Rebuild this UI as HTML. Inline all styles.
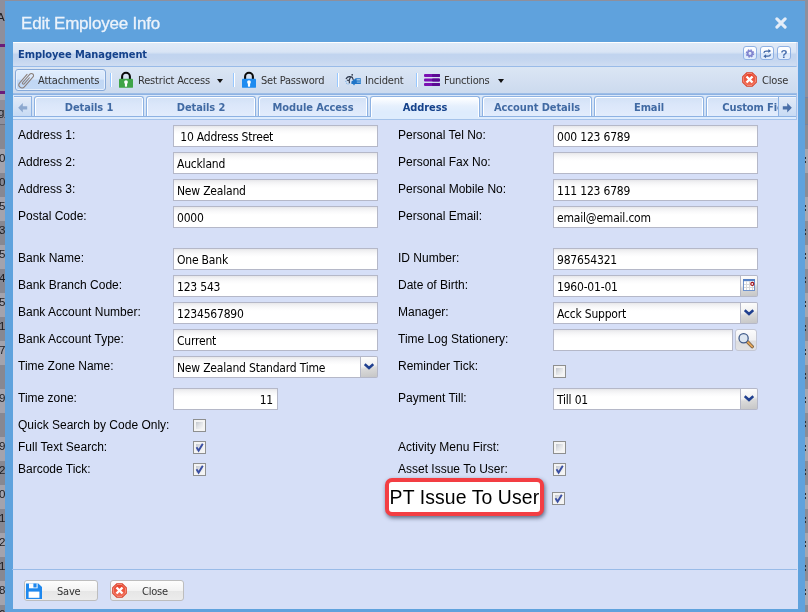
<!DOCTYPE html>
<html>
<head>
<meta charset="utf-8">
<title>Edit Employee Info</title>
<style>
html,body{margin:0;padding:0;}
body{width:808px;height:612px;overflow:hidden;background:#8e8f9c;position:relative;font-family:"Liberation Sans",sans-serif;}
*{box-sizing:border-box;}
.abs{position:absolute;}
#modal{position:absolute;left:5px;top:1px;width:800px;height:620px;background:#5fa2dd;}
#title{position:absolute;left:21px;top:14px;font:17px "Liberation Sans",sans-serif;color:#ecf3fb;-webkit-text-stroke:0.3px #ecf3fb;letter-spacing:-0.2px;white-space:nowrap;line-height:20px;}
#xclose{position:absolute;left:775px;top:17px;width:12px;height:12px;}
#panel{position:absolute;left:12px;top:42px;width:785.5px;height:566.5px;background:#d6dff7;overflow:hidden;}
#phead{position:absolute;left:0;top:0;width:785px;height:25px;border:1px solid #99bbe8;border-top-color:#fff;border-left-color:#c5d7f0;border-right-color:#c5d7f0;
 background:linear-gradient(#e0eaf7 0,#d9e5f5 9px,#c1d4ef 11.5px,#c3d5ef 16px,#cfddf2 23px);}
#phead .t{position:absolute;left:5px;top:4px;font:bold 11px "DejaVu Sans Condensed","DejaVu Sans",sans-serif;font-stretch:condensed;color:#15428b;letter-spacing:-0.08px;white-space:nowrap;line-height:15px;}
.tool{position:absolute;top:3px;width:14px;height:14px;border:1px solid #8fb1e4;border-radius:3px;background:linear-gradient(#fff 0,#f6faff 48%,#d9e7fa 52%,#e3eefc 100%);}
.tool svg{position:absolute;left:0;top:0}
#tbar{position:absolute;left:0;top:25px;width:785px;height:27px;border-bottom:1px solid #9dbde6;background:linear-gradient(#dbe6f4 0,#d5e1f2 40%,#ccdaee 100%);}
.tbtxt{position:absolute;font:11px "DejaVu Sans Condensed","DejaVu Sans",sans-serif;font-stretch:condensed;color:#333;white-space:nowrap;line-height:14px;letter-spacing:-0.18px;}
.sep{position:absolute;top:28px;width:2px;height:14px;border-left:1px solid #98c8ff;border-right:1px solid #fff;top:6px}
#tabhead{position:absolute;left:0;top:52px;width:785px;height:26px;background:#deecfd;border:1px solid #8db2e3;border-bottom:none;border-left-color:#93b6e6;border-right-color:#a8c5ec;}
#tabstrip{position:absolute;left:0;top:0;width:783px;height:22px;border-bottom:1px solid #8db2e3;background:linear-gradient(#dbe8f9,#cedff5);}
#tabspacer{position:absolute;left:0px;top:75px;width:785px;height:3px;background:#deecfd;border:1px solid #a8c5ec;border-top:none;border-bottom-color:#a5c3ea;}
.tab{position:absolute;top:1px;width:110px;height:20px;border:1px solid #8db2e3;border-bottom:none;border-radius:3px 3px 0 0;background:linear-gradient(#d2e1f6 0,#dbe7fa 40%,#e2ecfc 100%);box-shadow:inset 1px 1px 0 #fff,inset -1px 0 0 #fff;text-align:center;font:bold 11px "DejaVu Sans Condensed","DejaVu Sans",sans-serif;font-stretch:condensed;color:#416aa3;line-height:18px;padding-top:2px;letter-spacing:-0.1px;white-space:nowrap;overflow:hidden;}
.tab.act{height:21px;background:linear-gradient(#fff 0,#f6faff 18%,#e6f0fd 45%,#deecfd 75%);color:#15428b;}
.scr{position:absolute;top:1px;width:18px;height:20px;background:linear-gradient(#e2eaf7,#c8dbf4);border-top:1px solid #8db2e3;box-shadow:inset 0 1px 0 #eef3fb;}
#body{position:absolute;left:-12px;top:-42px;width:808px;height:612px;}
.lbl{position:absolute;font:12px "Liberation Sans",sans-serif;color:#000;white-space:nowrap;line-height:14px;}
.inp{position:absolute;height:22px;border:1px solid #b5b8c8;background:#fff linear-gradient(#e6e6e9 0,#f1f1f3 2px,#fafafb 5px,#fff 8px);font:12px "DejaVu Sans Condensed","DejaVu Sans",sans-serif;font-stretch:condensed;color:#000;line-height:20px;padding:1px 0 0 3px;white-space:pre;letter-spacing:-0.2px;overflow:hidden;}
.trig{position:absolute;width:17px;height:22px;border:1px solid #b5b8c8;border-left:none;border-radius:0 2px 2px 0;background:linear-gradient(172deg,#fdfdfd 0,#f1f1f1 44%,#dadada 56%,#c6c6c6 100%);}
.cb{position:absolute;width:13px;height:13px;border:1px solid #8e8f8f;padding:2px;background:linear-gradient(135deg,#c3c7ce 0%,#e2e4e7 50%,#f7f7f7 100%) content-box,#f4f4f4;}
#foot{position:absolute;left:0;top:527px;width:785px;height:39px;border-top:1px solid #99bbe8;}
.btn{position:absolute;top:10px;width:74px;height:21px;border:1px solid #bdbdbd;border-radius:3px;background:linear-gradient(#fdfdfd,#f3f3f3 50%,#e6e6e6 52%,#ececec);}
.btn span{position:absolute;top:4px;font:11px "DejaVu Sans Condensed","DejaVu Sans",sans-serif;font-stretch:condensed;color:#333;line-height:14px;letter-spacing:-0.2px;}
#hl{position:absolute;left:384.6px;top:478px;width:159px;height:38px;border:4px solid #f33e43;border-radius:7px;background:#fff;box-shadow:1px 2px 4px rgba(20,30,60,.62);}
#hl span{position:absolute;left:1px;top:4px;font:19.4px "Liberation Sans",sans-serif;color:#000;white-space:nowrap;line-height:22px;letter-spacing:0.1px;}

.abtn{position:absolute;left:3px;top:2px;width:91px;height:22px;border:1px solid #86a9d9;border-radius:3px;background:linear-gradient(#e0edfd,#d8e7fb 46%,#c1d7f4 50%,#c3d9f5);box-shadow:inset 0 0 0 1px #e6f0fd;}
.arr{position:absolute;width:0;height:0;border-left:3.5px solid transparent;border-right:3.5px solid transparent;border-top:4px solid #111;}
.sbtn{position:absolute;width:22px;height:22px;border:1px solid #c4c7d4;border-radius:3px;background:linear-gradient(#fbfbfc,#f0f0f2 50%,#dededf 55%,#e2e2e4);}

#lstrip{position:absolute;left:0;top:0;width:5px;height:612px;overflow:hidden;background:#8e8f9c;}
#rstrip{position:absolute;left:805px;top:0;width:3px;height:612px;overflow:hidden;background:#8e8f9c;}
.bands{position:absolute;left:0;top:125px;width:5px;height:490px;background:repeating-linear-gradient(#878892 0,#878892 24px,#a3a3ad 24px,#a3a3ad 48px);}
.dot{position:absolute;left:0;width:1.4px;height:1.8px;background:#303036;}
.sd{position:absolute;font:11.5px "Liberation Sans",sans-serif;color:#1c1c20;line-height:14px;}
.pl{position:absolute;left:0;width:5px;height:3px;background:#6a1d7a;}
#wrap{position:absolute;left:0;top:0;width:808px;height:612px;overflow:hidden;will-change:transform;}
</style>
</head>
<body>
<div id="wrap">
<div id="lstrip">
<div class="bands"></div>
<span class="sd" style="top:10px;left:-3px">A</span>
<div class="pl" style="top:44px"></div><div class="pl" style="top:91px"></div>
<div style="position:absolute;left:0;top:94px;width:5px;height:6px;background:#a2a3ae"></div>
<span class="sd" style="top:105px;left:-2px;text-decoration:underline">g</span>
<div style="position:absolute;left:0;top:124px;width:5px;height:1px;background:#6c6d78"></div>
<span class="sd" style="top:151px;left:-1px">0</span>
<span class="sd" style="top:175px;left:-1px">0</span>
<span class="sd" style="top:199px;left:-1px">5</span>
<span class="sd" style="top:223px;left:-1px">3</span>
<span class="sd" style="top:247px;left:-1px">5</span>
<span class="sd" style="top:271px;left:-1px">4</span>
<span class="sd" style="top:295px;left:-1px">5</span>
<span class="sd" style="top:319px;left:-1px">1</span>
<span class="sd" style="top:343px;left:-1px">7</span>
<span class="sd" style="top:391px;left:-1px">9</span>
<span class="sd" style="top:439px;left:-1px">9</span>
<span class="sd" style="top:463px;left:-1px">2</span>
<span class="sd" style="top:487px;left:-1px">0</span>
<span class="sd" style="top:511px;left:-1px">1</span>
<span class="sd" style="top:535px;left:-1px">2</span>
<span class="sd" style="top:559px;left:-1px">1</span>
<span class="sd" style="top:583px;left:-1px">8</span>
<span class="sd" style="top:607px;left:-1px">6</span>
</div>
<div id="rstrip"><div style="position:absolute;left:0;top:97px;width:3px;height:27px;background:#86878f;border-top:1px solid #7683a2"></div><div style="position:absolute;left:0;top:124px;width:3px;height:1px;background:#7683a2"></div><div class="bands" style="background:repeating-linear-gradient(#8b8c95 0,#8b8c95 24px,#a6a6ae 24px,#a6a6ae 48px)"></div><i class="dot" style="top:156.8px"></i><i class="dot" style="top:161.0px"></i><i class="dot" style="top:204.8px"></i><i class="dot" style="top:209.0px"></i><i class="dot" style="top:228.8px"></i><i class="dot" style="top:233.0px"></i><i class="dot" style="top:252.8px"></i><i class="dot" style="top:257.0px"></i><i class="dot" style="top:276.8px"></i><i class="dot" style="top:281.0px"></i><i class="dot" style="top:300.8px"></i><i class="dot" style="top:305.0px"></i><i class="dot" style="top:324.8px"></i><i class="dot" style="top:329.0px"></i><i class="dot" style="top:348.8px"></i><i class="dot" style="top:353.0px"></i><i class="dot" style="top:372.8px"></i><i class="dot" style="top:377.0px"></i><i class="dot" style="top:396.8px"></i><i class="dot" style="top:401.0px"></i><i class="dot" style="top:420.8px"></i><i class="dot" style="top:425.0px"></i><i class="dot" style="top:444.8px"></i><i class="dot" style="top:449.0px"></i><i class="dot" style="top:468.8px"></i><i class="dot" style="top:473.0px"></i><i class="dot" style="top:492.8px"></i><i class="dot" style="top:497.0px"></i><i class="dot" style="top:516.8px"></i><i class="dot" style="top:521.0px"></i><i class="dot" style="top:540.8px"></i><i class="dot" style="top:545.0px"></i><i class="dot" style="top:564.8px"></i><i class="dot" style="top:569.0px"></i><i class="dot" style="top:588.8px"></i><i class="dot" style="top:593.0px"></i><i class="dot" style="top:612.8px"></i><i class="dot" style="top:617.0px"></i></div>
<div id="modal"></div>
<div id="title">Edit Employee Info</div>
<svg id="xclose" viewBox="0 0 12 12"><path d="M1.9 1.9 L10.1 10.1 M10.1 1.9 L1.9 10.1" stroke="#e4edf8" stroke-width="3.1" stroke-linecap="round"/></svg>

<div id="panel">
  <div id="phead"><div class="t">Employee Management</div>
    <div class="tool" style="left:730px"><svg width="12" height="12" viewBox="0 0 12 12"><g transform="translate(6,6.5) scale(0.9) translate(-6,-6)"><circle cx="6" cy="6" r="3.6" fill="none" stroke="#8185cf" stroke-width="2.2" stroke-dasharray="1.6 1.23"/><circle cx="6" cy="6" r="2.6" fill="none" stroke="#8185cf" stroke-width="1.9"/></g></svg></div>
    <div class="tool" style="left:747px"><svg width="12" height="12" viewBox="0 0 12 12"><g transform="translate(6.2,6.6) scale(0.88) translate(-6,-6)"><path d="M2.2 5.2 C2.4 3.6 3.6 3.1 5 3.1 H8" fill="none" stroke="#3f66a5" stroke-width="1.4"/><path d="M7.3 0.8 L10.4 3.1 L7.3 5.4 Z" fill="#3f66a5"/><path d="M9.8 6.8 C9.6 8.4 8.4 8.9 7 8.9 H4" fill="none" stroke="#3f66a5" stroke-width="1.4"/><path d="M4.7 6.6 L1.6 8.9 L4.7 11.2 Z" fill="#3f66a5"/></g></svg></div>
    <div class="tool" style="left:764px"><span style="position:absolute;left:0;top:0px;width:12px;text-align:center;font:bold 11.5px 'Liberation Sans',sans-serif;color:#4a70ae;line-height:14px">?</span></div>
  </div>
  <div id="tbar">
    <div class="abtn"></div>
    <svg class="abs" style="left:6px;top:5px;overflow:visible" width="17" height="17" viewBox="0 0 17 17"><g transform="translate(8.1,8.2) rotate(41)"><path d="M -3.1,-5 V 6.2 a3.1,3.1 0 0 0 6.2,0 V -7 a2.1,2.1 0 0 0 -4.2,0 V 4 a1,1 0 0 0 2,0 V -4" fill="none" stroke="#8a7e79" stroke-width="1.05" stroke-linecap="round"/></g></svg>
    <div class="tbtxt" style="left:26px;top:7px">Attachments</div>
    <div class="sep" style="left:98px"></div>
    <svg class="abs" style="left:106px;top:5px;overflow:visible" width="16" height="16" viewBox="0 0 16 16"><path d="M4.1 7.5 V4.7 a3.9 3.9 0 0 1 7.8 0 V7.5" fill="none" stroke="#0a0a0a" stroke-width="2.1"/><rect x="1" y="6.7" width="14" height="9.1" rx="0.9" fill="#3fa447"/><circle cx="8" cy="10.1" r="1.9" fill="#fff"/><rect x="6.9" y="10.1" width="2.2" height="4.6" rx="0.6" fill="#fff"/></svg>
    <div class="tbtxt" style="left:126px;top:7px">Restrict Access</div>
    <div class="arr" style="left:205px;top:12px"></div>
    <div class="sep" style="left:221px"></div>
    <svg class="abs" style="left:229px;top:5px;overflow:visible" width="16" height="16" viewBox="0 0 16 16"><path d="M4.1 7.5 V4.7 a3.9 3.9 0 0 1 7.8 0 V7.5" fill="none" stroke="#0a0a0a" stroke-width="2.1"/><rect x="1" y="6.7" width="14" height="9.1" rx="0.9" fill="#1e8bf0"/><circle cx="8" cy="10.1" r="1.9" fill="#fff"/><rect x="6.9" y="10.1" width="2.2" height="4.6" rx="0.6" fill="#fff"/></svg>
    <div class="tbtxt" style="left:249px;top:7px">Set Password</div>
    <div class="sep" style="left:325px"></div>
    <svg class="abs" style="left:333px;top:5px" width="16" height="16" viewBox="0 0 16 16"><circle cx="7.2" cy="2.8" r="0.85" fill="#2a3548"/><path d="M1.2 6.6 C2 5.2 3.2 4.5 4.6 4.6 L7.2 5.1 L8.2 7.6 M5.6 4.8 L4.2 8.4 L4.4 10.8 M4.2 8.4 L2.4 8.2" fill="none" stroke="#2a3548" stroke-width="1.15" stroke-linecap="round" stroke-linejoin="round"/><path d="M6.4 12 V9.6 L9.2 7.6 L10.8 6.2 H15.8 V12 H10 L9 13.6 L8 12 Z" fill="#1f75c8"/><rect x="11.6" y="7.2" width="3.6" height="1.2" fill="#bcd9f2"/><rect x="11.8" y="9.6" width="3.6" height="1" fill="#9cc5ea"/><rect x="0.2" y="8.9" width="1.3" height="0.8" fill="#6aa8e0"/><rect x="1" y="10.8" width="1" height="0.8" fill="#6aa8e0"/><rect x="2.6" y="11.4" width="1" height="1" fill="#6aa8e0"/></svg>
    <div class="tbtxt" style="left:353px;top:7px">Incident</div>
    <div class="sep" style="left:404px"></div>
    <svg class="abs" style="left:412px;top:5px" width="16" height="16" viewBox="0 0 16 16"><g fill="#7a10b2"><rect x="0" y="2" width="16" height="3" rx="1"/><rect x="0" y="6.5" width="16" height="3" rx="1"/><rect x="0" y="11" width="16" height="3" rx="1"/></g><g fill="#5a0a92"><rect x="8" y="2" width="8" height="3" rx="1"/><rect x="8" y="6.5" width="8" height="3" rx="1"/><rect x="8" y="11" width="8" height="3" rx="1"/></g></svg>
    <div class="tbtxt" style="left:432px;top:7px">Functions</div>
    <div class="arr" style="left:486px;top:12px"></div>
    <svg class="abs" style="left:730px;top:5px" width="16" height="16" viewBox="0 0 16 16"><defs><linearGradient id="g1" x1="0" y1="0" x2="0" y2="1"><stop offset="0" stop-color="#e8412a"/><stop offset="1" stop-color="#f26d56"/></linearGradient></defs><polygon points="4.5,0.2 10.5,0.2 14.8,4.5 14.8,10.5 10.5,14.8 4.5,14.8 0.2,10.5 0.2,4.5" fill="#d93a23"/><polygon points="5,1.5 10,1.5 13.5,5 13.5,10 10,13.5 5,13.5 1.5,10 1.5,5" fill="url(#g1)" stroke="#f39a88" stroke-width="0.8"/><path d="M4.5 4.5 L10.5 10.5 M10.5 4.5 L4.5 10.5" stroke="#fff" stroke-width="2.4" stroke-linecap="butt"/></svg>
    <div class="tbtxt" style="left:750px;top:7px">Close</div>
  </div>
  <div id="tabhead">
    <div id="tabstrip">
      <div class="scr" style="left:1px;border-right:1px solid #8db2e3"><svg width="10" height="10" viewBox="0 0 10 10" style="position:absolute;left:4px;top:5.5px"><path d="M0.2 4.8 L4.8 0.1 V3.2 H9.2 V6.4 H4.8 V9.5 Z" fill="#8ca8cf"/></svg></div>
      <div class="tab" style="left:21px">Details 1</div>
      <div class="tab" style="left:133px">Details 2</div>
      <div class="tab" style="left:245px">Module Access</div>
      <div class="tab act" style="left:357px">Address</div>
      <div class="tab" style="left:469px">Account Details</div>
      <div class="tab" style="left:581px">Email</div>
      <div class="tab" style="left:693px;width:73px;border-right:none;border-radius:3px 0 0 0;box-shadow:inset 1px 1px 0 #fff"><div style="width:108px">Custom Fields</div></div>
      <div class="scr" style="left:765px;border-left:1px solid #8db2e3"><svg width="10" height="10" viewBox="0 0 10 10" style="position:absolute;left:3px;top:5.5px"><path d="M9.8 4.8 L5.2 0.1 V3.2 H0.8 V6.4 H5.2 V9.5 Z" fill="#4a6fa8"/></svg></div>
    </div>
  </div>
  <div id="tabspacer"></div>
  <div id="body">
<div class="lbl" style="left:18px;top:128px">Address 1:</div>
<div class="lbl" style="left:18px;top:155px">Address 2:</div>
<div class="lbl" style="left:18px;top:182px">Address 3:</div>
<div class="lbl" style="left:18px;top:209px">Postal Code:</div>
<div class="lbl" style="left:18px;top:251px">Bank Name:</div>
<div class="lbl" style="left:18px;top:278px">Bank Branch Code:</div>
<div class="lbl" style="left:18px;top:305px">Bank Account Number:</div>
<div class="lbl" style="left:18px;top:332px">Bank Account Type:</div>
<div class="lbl" style="left:18px;top:359px">Time Zone Name:</div>
<div class="lbl" style="left:18px;top:391px">Time zone:</div>
<div class="lbl" style="left:18px;top:418px">Quick Search by Code Only:</div>
<div class="lbl" style="left:18px;top:440px">Full Text Search:</div>
<div class="lbl" style="left:18px;top:462px">Barcode Tick:</div>
<div class="lbl" style="left:398px;top:128px">Personal Tel No:</div>
<div class="lbl" style="left:398px;top:155px">Personal Fax No:</div>
<div class="lbl" style="left:398px;top:182px">Personal Mobile No:</div>
<div class="lbl" style="left:398px;top:209px">Personal Email:</div>
<div class="lbl" style="left:398px;top:251px">ID Number:</div>
<div class="lbl" style="left:398px;top:278px">Date of Birth:</div>
<div class="lbl" style="left:398px;top:305px">Manager:</div>
<div class="lbl" style="left:398px;top:332px">Time Log Stationery:</div>
<div class="lbl" style="left:398px;top:359px">Reminder Tick:</div>
<div class="lbl" style="left:398px;top:391px">Payment Till:</div>
<div class="lbl" style="left:398px;top:440px">Activity Menu First:</div>
<div class="lbl" style="left:398px;top:462px">Asset Issue To User:</div>
<div class="inp" style="left:173px;top:125px;width:205px"> 10 Address Street</div>
<div class="inp" style="left:173px;top:152px;width:205px">Auckland</div>
<div class="inp" style="left:173px;top:179px;width:205px">New Zealand</div>
<div class="inp" style="left:173px;top:206px;width:205px">0000</div>
<div class="inp" style="left:173px;top:248px;width:205px">One Bank</div>
<div class="inp" style="left:173px;top:275px;width:205px">123 543</div>
<div class="inp" style="left:173px;top:302px;width:205px">1234567890</div>
<div class="inp" style="left:173px;top:329px;width:205px">Current</div>
<div class="inp" style="left:173px;top:356px;width:188px">New Zealand Standard Time</div>
<div class="inp" style="left:173px;top:388px;width:105px;text-align:right;padding-right:4px">11</div>
<div class="inp" style="left:553px;top:125px;width:205px">000 123 6789</div>
<div class="inp" style="left:553px;top:152px;width:205px"></div>
<div class="inp" style="left:553px;top:179px;width:205px">111 123 6789</div>
<div class="inp" style="left:553px;top:206px;width:205px">email@email.com</div>
<div class="inp" style="left:553px;top:248px;width:205px">987654321</div>
<div class="inp" style="left:553px;top:275px;width:188px">1960-01-01</div>
<div class="inp" style="left:553px;top:302px;width:188px">Acck Support</div>
<div class="inp" style="left:553px;top:329px;width:180px"></div>
<div class="inp" style="left:553px;top:388px;width:188px">Till 01</div>
<div class="trig" style="left:361px;top:356px"><svg width="10" height="7" viewBox="0 0 10 7" style="position:absolute;left:3px;top:6px"><path d="M0.7 1.2 L5 5 L9.3 1.2" fill="none" stroke="#1f3f8f" stroke-width="2.5"/></svg></div>
<div class="trig" style="left:741px;top:302px"><svg width="10" height="7" viewBox="0 0 10 7" style="position:absolute;left:3px;top:6px"><path d="M0.7 1.2 L5 5 L9.3 1.2" fill="none" stroke="#1f3f8f" stroke-width="2.5"/></svg></div>
<div class="trig" style="left:741px;top:388px"><svg width="10" height="7" viewBox="0 0 10 7" style="position:absolute;left:3px;top:6px"><path d="M0.7 1.2 L5 5 L9.3 1.2" fill="none" stroke="#1f3f8f" stroke-width="2.5"/></svg></div>
<div class="trig" style="left:741px;top:275px"><svg width="12" height="12" viewBox="0 0 12 12" style="position:absolute;left:2px;top:3px"><rect x="0.5" y="0.5" width="11" height="11" fill="#fff" stroke="#6f92cc"/><rect x="0" y="0" width="12" height="2.2" fill="#5580c4"/><path d="M3.5 2 V11 M6.5 2 V11 M9.5 2 V11 M1 5.5 H11 M1 8.5 H11" stroke="#d8d8d8" stroke-width="1"/><circle cx="9.3" cy="4.9" r="1.5" fill="#fff" stroke="#a3141e" stroke-width="1.2"/></svg></div>
<div class="sbtn" style="left:735px;top:329px"><svg width="18" height="18" viewBox="0 0 18 18" style="position:absolute;left:1px;top:1px"><path d="M10.4 10.8 L15.2 15.6" stroke="#6b5641" stroke-width="3.4" stroke-linecap="round"/><path d="M10.4 10.8 L15.2 15.6" stroke="#e3a557" stroke-width="2" stroke-linecap="round"/><circle cx="6.6" cy="7.2" r="4.6" fill="#dde6f1" stroke="#3f5a88" stroke-width="1.3"/></svg></div>
<div class="cb" style="left:193px;top:419px"></div>
<div class="cb" style="left:193px;top:441px"><svg width="11" height="11" viewBox="0 0 11 11" style="position:absolute;left:0;top:0"><path d="M2.5 5.3 L4.6 8.6 L8.8 1.8" fill="none" stroke="#3a4fa3" stroke-width="1.9"/></svg></div>
<div class="cb" style="left:193px;top:463px"><svg width="11" height="11" viewBox="0 0 11 11" style="position:absolute;left:0;top:0"><path d="M2.5 5.3 L4.6 8.6 L8.8 1.8" fill="none" stroke="#3a4fa3" stroke-width="1.9"/></svg></div>
<div class="cb" style="left:553px;top:365px"></div>
<div class="cb" style="left:553px;top:441px"></div>
<div class="cb" style="left:553px;top:463px"><svg width="11" height="11" viewBox="0 0 11 11" style="position:absolute;left:0;top:0"><path d="M2.5 5.3 L4.6 8.6 L8.8 1.8" fill="none" stroke="#3a4fa3" stroke-width="1.9"/></svg></div>
<div class="cb" style="left:552px;top:492px"><svg width="11" height="11" viewBox="0 0 11 11" style="position:absolute;left:0;top:0"><path d="M2.5 5.3 L4.6 8.6 L8.8 1.8" fill="none" stroke="#3a4fa3" stroke-width="1.9"/></svg></div>
<div id="hl"><span>PT Issue To User</span></div>
  </div>
  <div style="position:absolute;left:0;top:0;width:0.4px;height:570px;background:#5fa2dd"></div>
  <div id="foot">
    <div class="btn" style="left:12px"><svg width="16" height="16" viewBox="0 0 16 16" style="position:absolute;left:1px;top:2px"><path d="M0 0.5 H12.3 L16 4 V16 H0 Z" fill="#1e88ee"/><rect x="2.6" y="8.6" width="10.8" height="6.2" fill="#fff"/><rect x="3" y="0.5" width="8.6" height="4.8" fill="#fff"/><rect x="7.4" y="0.5" width="3.2" height="4" fill="#1e88ee"/></svg><span style="left:32px">Save</span></div>
    <div class="btn" style="left:98px"><svg style="position:absolute;left:1px;top:2px" width="16" height="16" viewBox="0 0 16 16"><defs><linearGradient id="g2" x1="0" y1="0" x2="0" y2="1"><stop offset="0" stop-color="#e8412a"/><stop offset="1" stop-color="#f26d56"/></linearGradient></defs><polygon points="4.5,0.2 10.5,0.2 14.8,4.5 14.8,10.5 10.5,14.8 4.5,14.8 0.2,10.5 0.2,4.5" fill="#d93a23"/><polygon points="5,1.5 10,1.5 13.5,5 13.5,10 10,13.5 5,13.5 1.5,10 1.5,5" fill="url(#g2)" stroke="#f39a88" stroke-width="0.8"/><path d="M4.5 4.5 L10.5 10.5 M10.5 4.5 L4.5 10.5" stroke="#fff" stroke-width="2.4" stroke-linecap="butt"/></svg><span style="left:31px">Close</span></div>
  </div>
</div>
</div>
</body>
</html>
